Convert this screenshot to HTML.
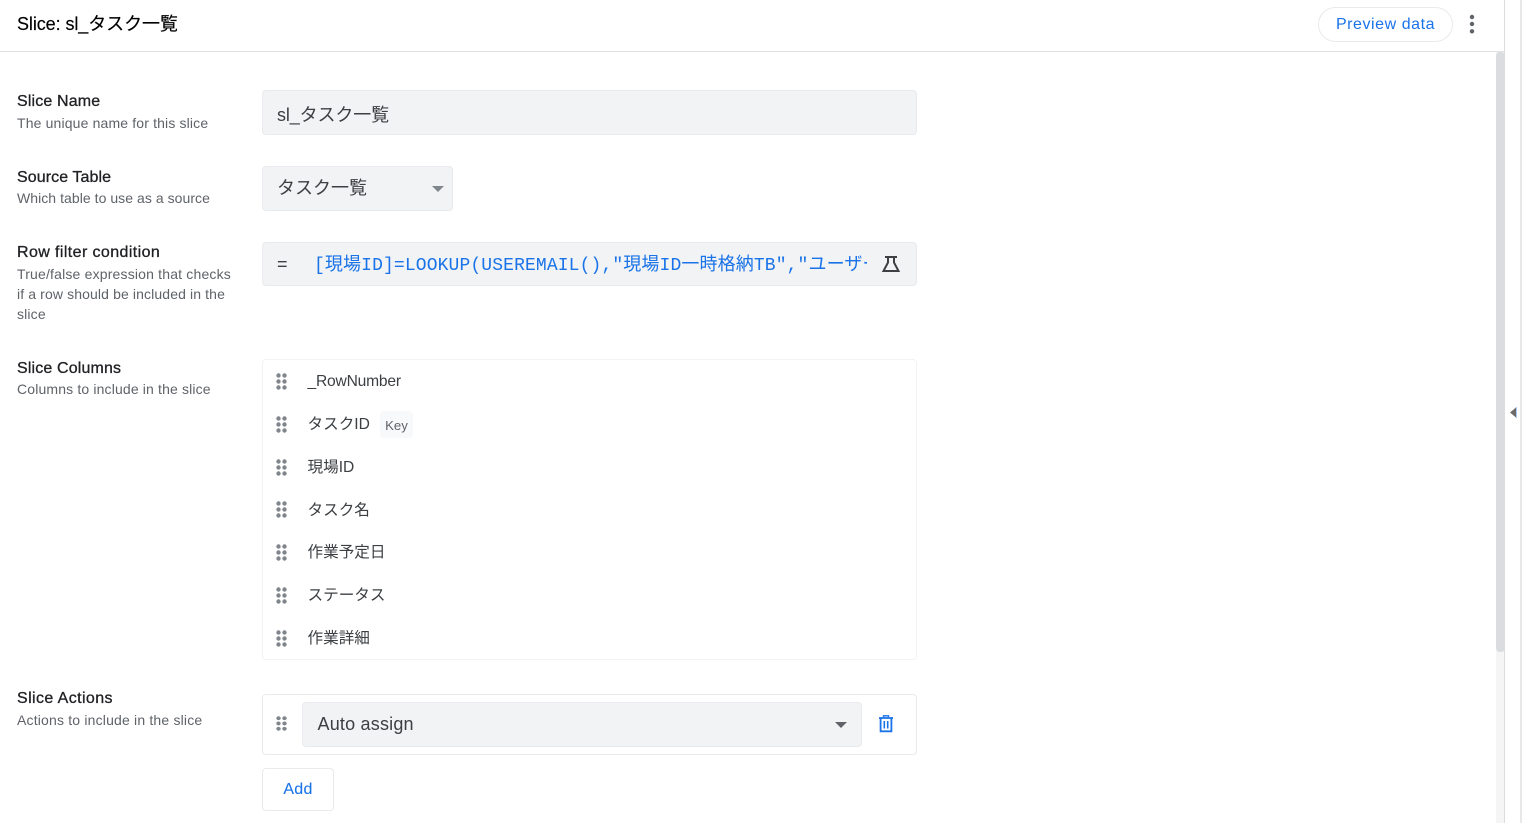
<!DOCTYPE html>
<html lang="ja">
<head>
<meta charset="utf-8">
<title>Slice</title>
<style>
html,body{margin:0;padding:0;width:1522px;height:823px;overflow:hidden;background:#fff;}
body{position:relative;font-family:"Liberation Sans","Noto Sans CJK JP",sans-serif;color:#3c4043;}
.a{position:absolute;white-space:nowrap;}
.t{font-size:16px;line-height:20px;color:#202124;letter-spacing:.15px;-webkit-text-stroke:.3px #202124;left:17px;}
.d{font-size:14px;line-height:20px;color:#5f6368;letter-spacing:.15px;left:17px;}
.f{background:#f1f3f4;border:1px solid #e8eaed;border-radius:4px;box-sizing:border-box;}
.b{border:1px solid #e8eaed;border-radius:4px;box-sizing:border-box;background:#fff;}
.c{font-size:15.6px;line-height:22px;color:#3c4043;left:307.500px;}
.g{position:absolute;left:276px;width:11px;height:17px;}
</style>
</head>
<body>
<!-- header -->
<div class="a" style="left:17px;top:12px;font-size:18px;line-height:24px;color:#000;letter-spacing:-.08px;-webkit-text-stroke:.15px #000;">Slice: sl_タスク一覧</div>
<div class="a" style="left:0;top:51px;width:1505px;height:1px;background:#e0e0e0;"></div>
<div class="a" style="left:1318px;top:7px;width:135px;height:35px;border:1px solid #e8eaed;border-radius:18px;box-sizing:border-box;text-align:center;font-size:16px;line-height:34px;color:#1a73e8;letter-spacing:.55px;">Preview data</div>
<svg class="a" style="left:1468px;top:14px" width="8" height="21" viewBox="0 0 8 21"><circle cx="4" cy="3" r="2.2" fill="#5f6368"/><circle cx="4" cy="10" r="2.2" fill="#5f6368"/><circle cx="4" cy="17.3" r="2.2" fill="#5f6368"/></svg>

<!-- scrollbar & edge -->
<div class="a" style="left:1496px;top:52px;width:9px;height:771px;background:#f5f5f5;"></div>
<div class="a" style="left:1496px;top:52px;width:9px;height:600px;background:#dadce0;border-radius:4px;"></div>
<div class="a" style="left:1504px;top:0;width:1px;height:823px;background:#dadce0;"></div>
<div class="a" style="left:1520px;top:0;width:2px;height:823px;background:#e8e8e8;"></div>
<svg class="a" style="left:1510px;top:407px" width="8" height="11" viewBox="0 0 8 11"><path d="M0 5.5 6 .5V10.500Z" fill="#6d6a68"/><rect x="6" y="0" width="1" height="11" fill="#a8c7fa"/></svg>

<!-- Slice Name -->
<div class="a t" style="top:92px;">Slice Name</div>
<div class="a d" style="top:113px;">The unique name for this slice</div>
<div class="a f" style="left:262px;top:90px;width:655px;height:45px;"></div>
<div class="a" style="left:277px;top:103px;font-size:18px;line-height:24px;color:#3c4043;letter-spacing:-.12px;">sl_タスク一覧</div>

<!-- Source Table -->
<div class="a t" style="top:168px;letter-spacing:.08px;">Source Table</div>
<div class="a d" style="top:188px;letter-spacing:.05px;">Which table to use as a source</div>
<div class="a f" style="left:262px;top:166px;width:191px;height:45px;"></div>
<div class="a" style="left:277px;top:176px;font-size:18px;line-height:24px;color:#3c4043;">タスク一覧</div>
<div class="a" style="left:432px;top:186px;width:0;height:0;border-left:6px solid transparent;border-right:6px solid transparent;border-top:6px solid #80868b;"></div>

<!-- Row filter -->
<div class="a t" style="top:243px;letter-spacing:.4px;">Row filter condition</div>
<div class="a d" style="top:264px;letter-spacing:.18px;">True/false expression that checks</div>
<div class="a d" style="top:284px;letter-spacing:.12px;">if a row should be included in the</div>
<div class="a d" style="top:304px;">slice</div>
<div class="a f" style="left:262px;top:242px;width:655px;height:44px;"></div>
<div class="a" style="left:277px;top:253px;font-size:18px;line-height:22px;color:#3c4043;">=</div>
<div class="a" style="left:314px;top:254px;width:553px;overflow:hidden;font-family:'Liberation Mono','Noto Sans CJK JP',monospace;font-size:18px;line-height:24px;color:#1a73e8;letter-spacing:.12px;">[現場ID]=LOOKUP(USEREMAIL(),"現場ID一時格納TB","ユーザー</div>
<svg class="a" style="left:881px;top:255px" width="20" height="18" viewBox="0 0 20 18" fill="none" stroke="#3c4043" stroke-width="2"><path d="M4 2H16"/><path d="M7 2V7.500L2.500 16H17.500L13 7.500V2"/></svg>

<!-- Slice Columns -->
<div class="a t" style="top:359px;">Slice Columns</div>
<div class="a d" style="top:379px;">Columns to include in the slice</div>
<div class="a b" style="left:262px;top:359px;width:655px;height:301px;border-color:#f1f3f4;"></div>

<svg width="0" height="0" style="position:absolute"><defs><g id="dots" fill="#80868b"><circle cx="2.500" cy="2.500" r="2.200"/><circle cx="8.500" cy="2.500" r="2.200"/><circle cx="2.500" cy="8.500" r="2.200"/><circle cx="8.500" cy="8.500" r="2.200"/><circle cx="2.500" cy="14.500" r="2.200"/><circle cx="8.500" cy="14.500" r="2.200"/></g></defs></svg>

<svg class="g" style="top:373px" viewBox="0 0 11 17"><use href="#dots"/></svg>
<div class="a c" style="top:371px;letter-spacing:-.2px;">_RowNumber</div>
<svg class="g" style="top:416px" viewBox="0 0 11 17"><use href="#dots"/></svg>
<div class="a c" style="top:414px;">タスクID</div>
<div class="a" style="left:380px;top:411px;width:33px;height:27px;background:#f8f9fa;border-radius:4px;text-align:center;font-size:13.2px;line-height:29px;color:#5f6368;">Key</div>
<svg class="g" style="top:459px" viewBox="0 0 11 17"><use href="#dots"/></svg>
<div class="a c" style="top:457px;">現場ID</div>
<svg class="g" style="top:501px" viewBox="0 0 11 17"><use href="#dots"/></svg>
<div class="a c" style="top:500px;">タスク名</div>
<svg class="g" style="top:544px" viewBox="0 0 11 17"><use href="#dots"/></svg>
<div class="a c" style="top:542px;">作業予定日</div>
<svg class="g" style="top:587px" viewBox="0 0 11 17"><use href="#dots"/></svg>
<div class="a c" style="top:585px;">ステータス</div>
<svg class="g" style="top:630px" viewBox="0 0 11 17"><use href="#dots"/></svg>
<div class="a c" style="top:628px;">作業詳細</div>

<!-- Slice Actions -->
<div class="a t" style="top:689px;letter-spacing:.4px;">Slice Actions</div>
<div class="a d" style="top:710px;letter-spacing:.18px;">Actions to include in the slice</div>
<div class="a b" style="left:262px;top:694px;width:655px;height:61px;"></div>
<svg class="g" style="top:716px;height:15px" viewBox="0 0 11 17" preserveAspectRatio="none"><use href="#dots"/></svg>
<div class="a f" style="left:302px;top:702px;width:560px;height:45px;"></div>
<div class="a" style="left:317.500px;top:713px;font-size:18px;line-height:22px;color:#3c4043;letter-spacing:.2px;">Auto assign</div>
<div class="a" style="left:835px;top:722px;width:0;height:0;border-left:6px solid transparent;border-right:6px solid transparent;border-top:6px solid #5f6368;"></div>
<svg class="a" style="left:878px;top:715px" width="16" height="18" viewBox="0 0 16 18" fill="none" stroke="#1a73e8"><path d="M1 3H15" stroke-width="1.800"/><path d="M5.500 2V.8H10.500V2" stroke-width="1.400"/><path d="M2.600 3V16.300H13.400V3" stroke-width="1.800"/><path d="M6.300 6V13.500M9.700 6V13.500" stroke-width="1.600"/></svg>
<div class="a b" style="left:262px;top:768px;width:72px;height:43px;text-align:center;font-size:16px;line-height:41px;color:#1a73e8;letter-spacing:.3px;-webkit-text-stroke:.1px #1a73e8;">Add</div>
</body>
</html>
